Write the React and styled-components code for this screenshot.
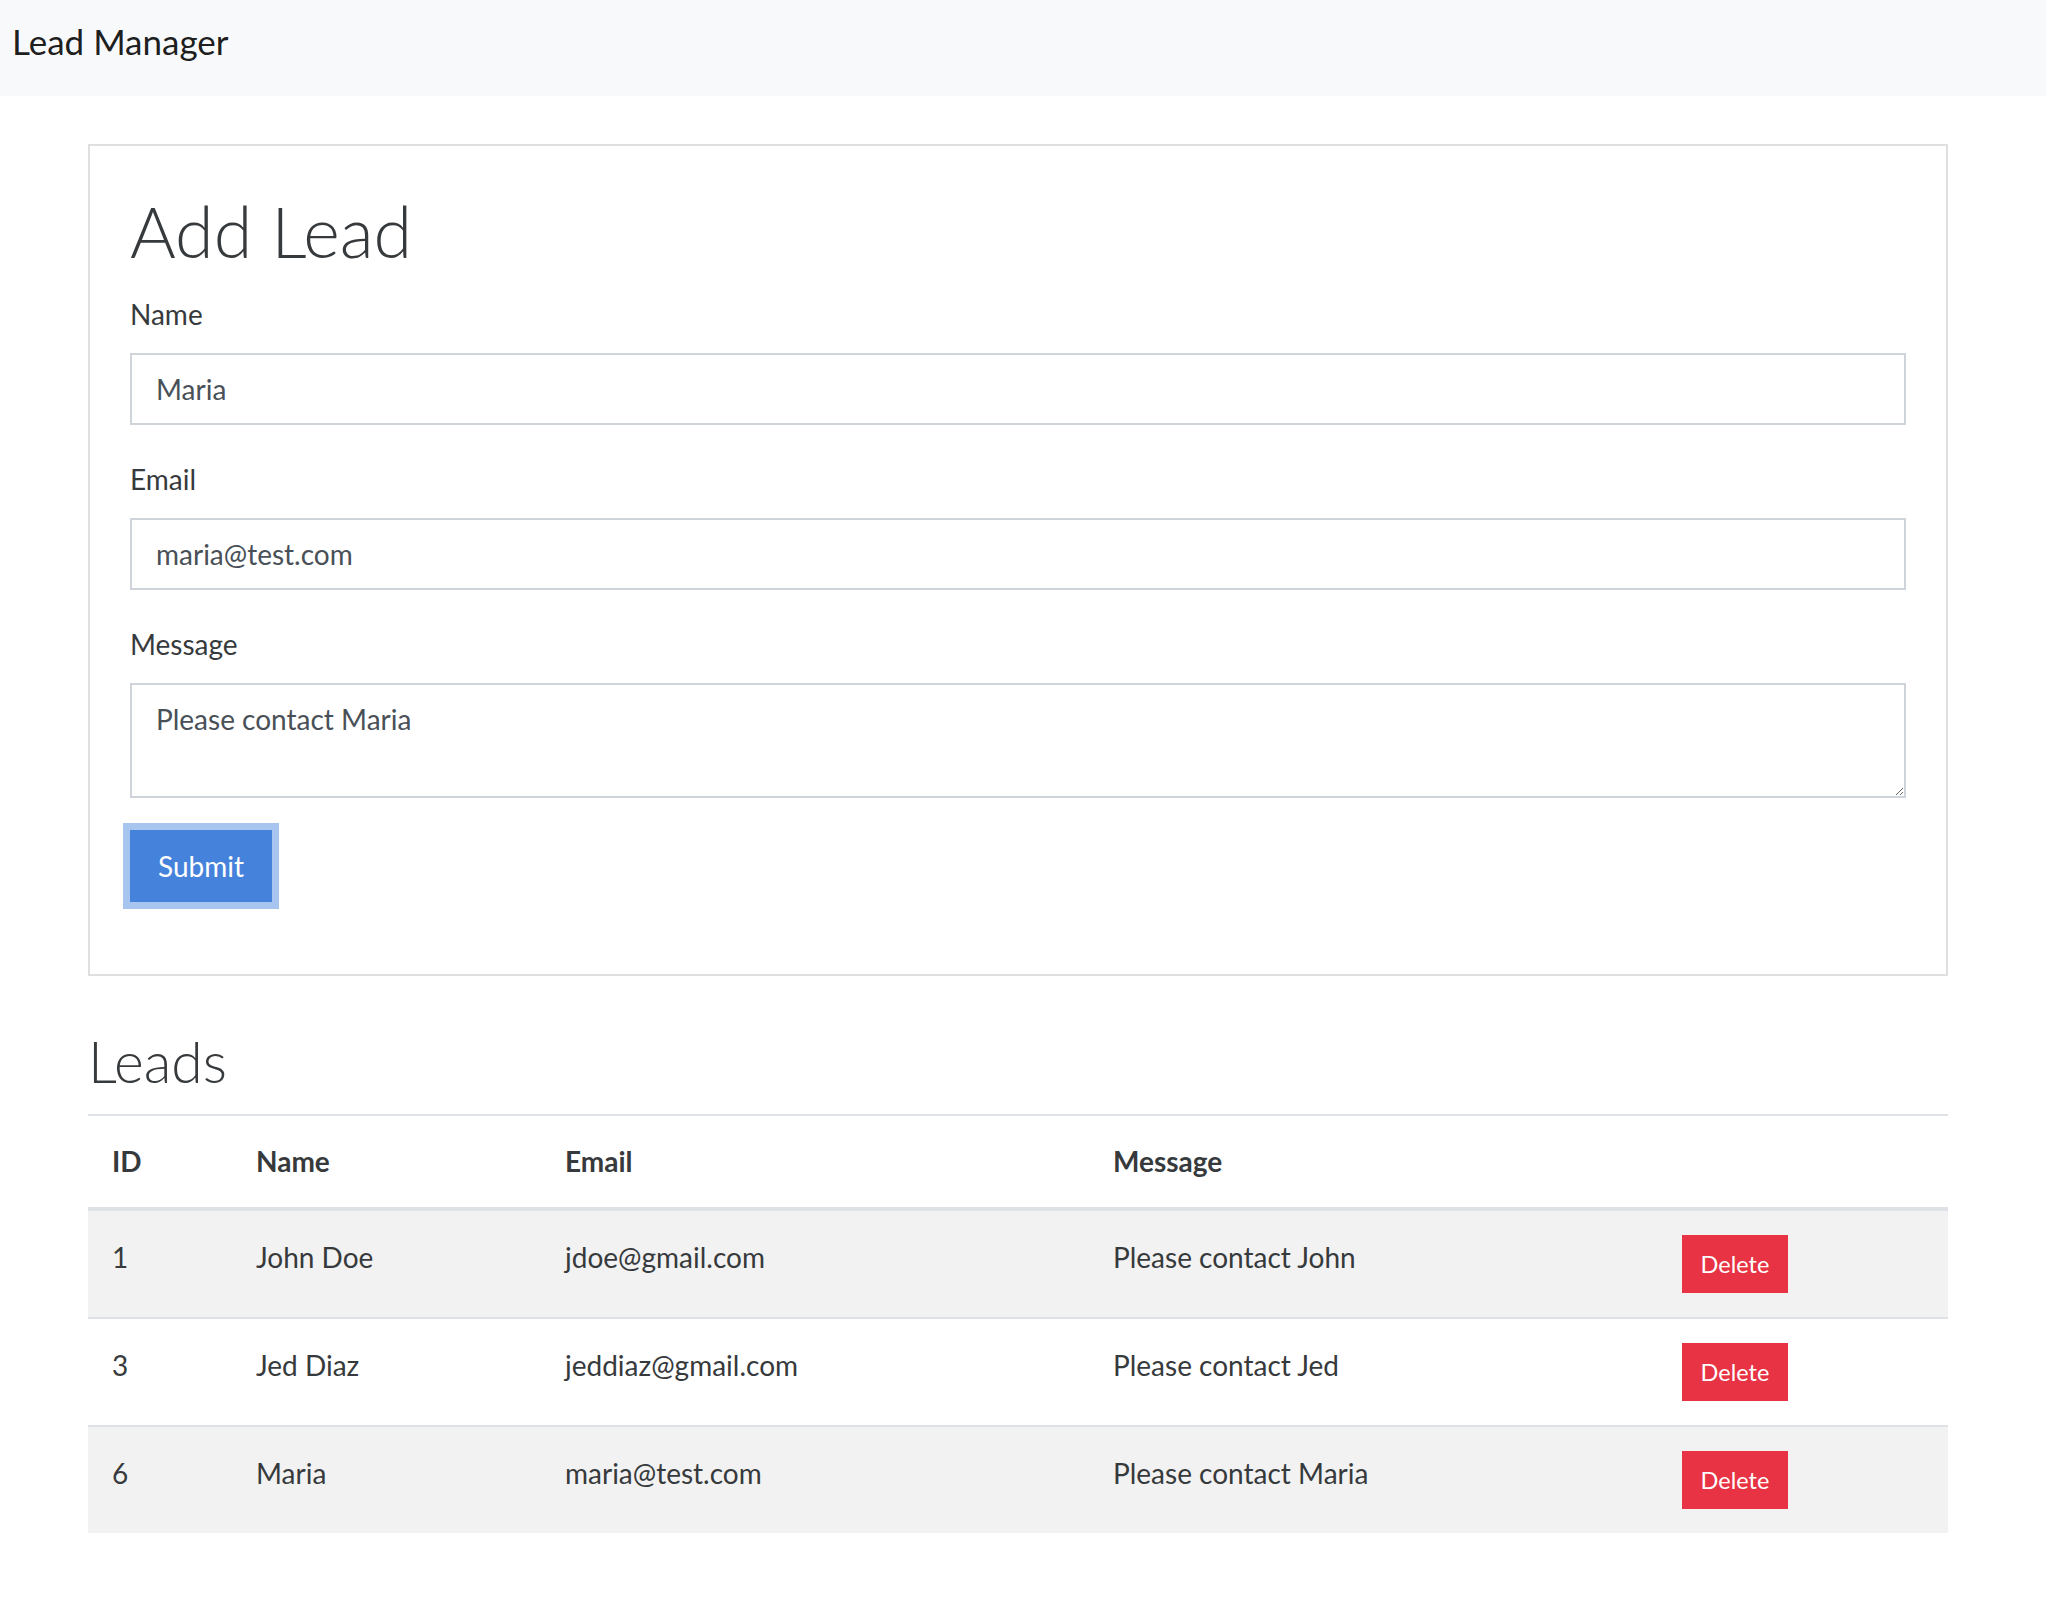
import React from 'react';
import styled, { createGlobalStyle } from 'styled-components';

const GlobalStyle = createGlobalStyle`
  html, body {
    margin: 0;
    padding: 0;
    background: #fff;
  }
  body {
    font-family: Lato, "Noto Sans", sans-serif;
    font-size: 28px;
    line-height: 45px;
    color: #373a3c;
  }
  * {
    box-sizing: border-box;
  }
`;

const leads = [
  { id: 1, name: 'John Doe', email: 'jdoe@gmail.com', message: 'Please contact John' },
  { id: 3, name: 'Jed Diaz', email: 'jeddiaz@gmail.com', message: 'Please contact Jed' },
  { id: 6, name: 'Maria', email: 'maria@test.com', message: 'Please contact Maria' },
];

const App = () => {
  return (
    <>
      <GlobalStyle />
      <Navbar>
        <Brand href="#">Lead Manager</Brand>
      </Navbar>
      <Container>
        <Card>
          <Title>Add Lead</Title>
          <form onSubmit={(e) => e.preventDefault()}>
            <Field>
              <Label>Name</Label>
              <Input type="text" name="name" defaultValue="Maria" />
            </Field>
            <Field>
              <Label>Email</Label>
              <Input type="email" name="email" defaultValue="maria@test.com" />
            </Field>
            <Field>
              <Label>Message</Label>
              <TextArea name="message" defaultValue="Please contact Maria" />
            </Field>
            <Field>
              <SubmitButton type="submit">Submit</SubmitButton>
            </Field>
          </form>
        </Card>

        <SectionTitle>Leads</SectionTitle>
        <Table>
          <colgroup>
            <col style={{ width: 144 }} />
            <col style={{ width: 309 }} />
            <col style={{ width: 548 }} />
            <col style={{ width: 569 }} />
            <col style={{ width: 290 }} />
          </colgroup>
          <thead>
            <tr>
              <Th>ID</Th>
              <Th>Name</Th>
              <Th>Email</Th>
              <Th>Message</Th>
              <Th />
            </tr>
          </thead>
          <tbody>
            {leads.map((lead, i) => (
              <Row key={lead.id} $striped={i % 2 === 0}>
                <Td>{lead.id}</Td>
                <Td>{lead.name}</Td>
                <Td>{lead.email}</Td>
                <Td>{lead.message}</Td>
                <Td>
                  <DeleteButton type="button">Delete</DeleteButton>
                </Td>
              </Row>
            ))}
          </tbody>
        </Table>
      </Container>
    </>
  );
};

export default App;

const Navbar = styled.nav`
  display: flex;
  align-items: flex-start;
  height: 96px;
  padding: 20px 12px 0;
  background: #f8f9fa;
`;

const Brand = styled.a`
  font-size: 35px;
  line-height: 43px;
  color: rgba(0, 0, 0, 0.9);
  text-decoration: none;
`;

const Container = styled.div`
  width: 1860px;
  margin-left: 88px;
  padding-bottom: 60px;
`;

const Card = styled.div`
  margin: 48px 0 51px;
  padding: 40px;
  border: 2px solid #dfdfdf;
  background: #fff;
`;

const Title = styled.h1`
  margin: 0 0 19px;
  padding-top: 3px;
  font-size: 70px;
  line-height: 84px;
  font-weight: 300;
`;

const Field = styled.div`
  margin-bottom: 32px;
`;

const Label = styled.label`
  display: block;
  margin-bottom: 16px;
`;

const Input = styled.input`
  display: block;
  width: 100%;
  height: 72px;
  padding: 0 24px;
  border: 2px solid #ced4da;
  border-radius: 0;
  font-family: inherit;
  font-size: 28px;
  color: #495057;
  background: #fff;
  outline: none;
`;

const TextArea = styled.textarea`
  display: block;
  width: 100%;
  height: 115px;
  padding: 12px 24px;
  border: 2px solid #ced4da;
  border-radius: 0;
  font-family: inherit;
  font-size: 28px;
  line-height: 45px;
  color: #495057;
  background: #fff;
  outline: none;
  resize: vertical;
`;

const SubmitButton = styled.button`
  display: block;
  width: 142px;
  height: 72px;
  padding: 0;
  border: 2px solid #4582dc;
  border-radius: 0;
  background: #4582dc;
  color: #fff;
  font-family: inherit;
  font-size: 28px;
  line-height: 45px;
  box-shadow: 0 0 0 7px #a8c5f0;
  cursor: pointer;
`;

const SectionTitle = styled.h2`
  margin: 0 0 19px;
  font-size: 57px;
  line-height: 68px;
  font-weight: 300;
`;

const Table = styled.table`
  width: 100%;
  table-layout: fixed;
  border-collapse: collapse;
`;

const Th = styled.th`
  padding: 23px 24px;
  border-top: 2px solid #dee2e6;
  border-bottom: 4px solid #dee2e6;
  text-align: left;
  vertical-align: bottom;
  font-weight: 700;
`;

const Row = styled.tr`
  background: ${(p) => (p.$striped ? '#f2f2f2' : 'transparent')};
`;

const Td = styled.td`
  padding: 24px;
  border-top: 2px solid #dee2e6;
  vertical-align: top;
`;

const DeleteButton = styled.button`
  display: block;
  width: 106px;
  height: 58px;
  padding: 0;
  border: 2px solid #e83344;
  border-radius: 0;
  background: #e83344;
  color: #fff;
  font-family: inherit;
  font-size: 23.5px;
  line-height: 38px;
  cursor: pointer;
`;
